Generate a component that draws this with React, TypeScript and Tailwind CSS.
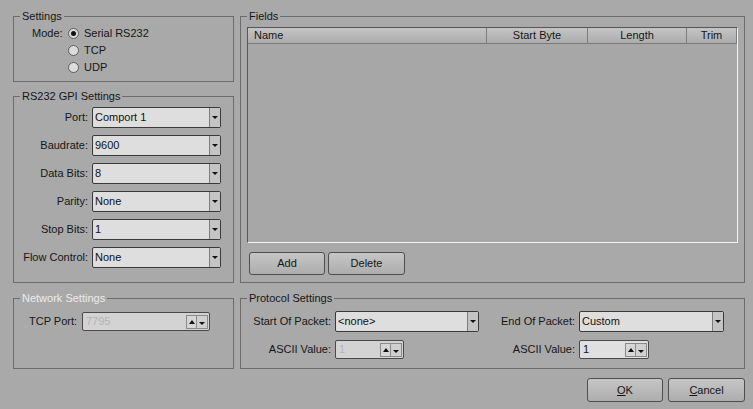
import React from "react";

const font = { fontFamily: '"Liberation Sans", Arial, sans-serif' };

function Group({
  title,
  disabled,
  className,
  children,
}: {
  title: string;
  disabled?: boolean;
  className?: string;
  children?: React.ReactNode;
}) {
  return (
    <fieldset className={`border border-[#6c6c6c] p-0 m-0 min-w-0 ${className ?? ""}`}>
      <legend
        className={`ml-[6px] px-[2px] h-[14px] leading-[14px] ${
          disabled ? "text-[#ececec]" : "text-[#161616]"
        }`}
      >
        {title}
      </legend>
      {children}
    </fieldset>
  );
}

function Radio({ label, checked }: { label: string; checked?: boolean }) {
  return (
    <div className="flex h-[17px] items-center gap-[5px]">
      <span className="flex h-[11px] w-[11px] items-center justify-center rounded-full border border-[#5c5c5c] bg-[#dcdcdc]">
        {checked && <span className="h-[5px] w-[5px] rounded-full bg-[#111]" />}
      </span>
      <span>{label}</span>
    </div>
  );
}

function Combo({ value, className }: { value: string; className?: string }) {
  return (
    <div
      className={`flex h-[21px] rounded-[2px] border border-[#3a3a3a] bg-[#dedede] ${className ?? ""}`}
    >
      <div className="flex-1 pl-[2px] leading-[19px] text-[#111]">{value}</div>
      <div className="flex w-[11px] items-center justify-center border-l border-[#7c7c7c] bg-[#c4c4c4]">
        <span className="h-0 w-0 border-x-[3px] border-t-[3px] border-x-transparent border-t-[#111]" />
      </div>
    </div>
  );
}

function Spin({
  value,
  disabled,
  className,
}: {
  value: string;
  disabled?: boolean;
  className?: string;
}) {
  return (
    <div
      className={`flex h-[19px] items-center rounded-[2px] border border-[#4a4a4a] ${
        disabled ? "bg-[#d3d3d3]" : "bg-[#e0e0e0]"
      } ${className ?? ""}`}
    >
      <div
        className={`flex-1 pl-[3px] leading-[17px] ${
          disabled ? "text-[#b4b4b4]" : "text-[#111]"
        }`}
      >
        {value}
      </div>
      <div className="mr-[1px] flex h-[14px]">
        <div className="flex w-[11px] items-center justify-center border border-[#8a8a8a] bg-[#d6d6d6]">
          <span className="h-0 w-0 border-x-[3px] border-b-[4px] border-x-transparent border-b-[#111]" />
        </div>
        <div className="flex w-[11px] items-end justify-center pb-[3px] border-y border-r border-[#8a8a8a] bg-[#d0d0d0]">
          <span className="h-0 w-0 border-x-[3px] border-t-[3px] border-x-transparent border-t-[#111]" />
        </div>
      </div>
    </div>
  );
}

function Button({ children, className }: { children: React.ReactNode; className?: string }) {
  return (
    <div
      className={`flex h-[23px] items-center justify-center rounded-[3px] border border-[#4e4e4e] bg-gradient-to-b from-[#c6c6c6] to-[#adadad] text-[#161616] ${
        className ?? ""
      }`}
    >
      {children}
    </div>
  );
}

const rs232 = [
  ["Port:", "Comport 1"],
  ["Baudrate:", "9600"],
  ["Data Bits:", "8"],
  ["Parity:", "None"],
  ["Stop Bits:", "1"],
  ["Flow Control:", "None"],
];

const columns = [
  { name: "Name", w: "w-[239px]", left: true },
  { name: "Start Byte", w: "w-[101px]" },
  { name: "Length", w: "w-[99px]" },
  { name: "Trim", w: "flex-1" },
];

export default function App() {
  return (
    <div
      style={font}
      className="flex h-[409px] w-[753px] flex-col bg-[#a9a9a9] pl-[13px] pr-[8px] pt-[9px] text-[11px] text-[#161616]"
    >
      {/* top row */}
      <div className="flex gap-[6px]">
        <div className="flex w-[221px] flex-col gap-[7px]">
          <Group title="Settings" className="h-[73px]">
            <div className="mt-[2px] flex pl-[18px]">
              <div className="h-[17px] w-[36px] leading-[17px]">Mode:</div>
              <div className="flex flex-col">
                <Radio label="Serial RS232" checked />
                <Radio label="TCP" />
                <Radio label="UDP" />
              </div>
            </div>
          </Group>

          <Group title="RS232 GPI Settings" className="h-[194px]">
            <div className="mt-[4px] flex flex-col gap-[7px]">
              {rs232.map(([label, value]) => (
                <div key={label} className="flex h-[21px] items-center">
                  <div className="w-[74px] text-right">{label}</div>
                  <Combo value={value} className="ml-[4px] w-[129px]" />
                </div>
              ))}
            </div>
          </Group>
        </div>

        <Group title="Fields" className="h-[274px] w-[505px]">
          <div className="mt-[4px] px-[6px]">
            <div className="flex h-[216px] flex-col border-l border-t border-[#565656] border-r-[#f4f4f4] border-b-[#f4f4f4] border-r border-b">
              <div className="flex h-[16px] border-b border-[#7a7a7a] bg-gradient-to-b from-[#c4c4c4] to-[#adadad]">
                {columns.map((c) => (
                  <div
                    key={c.name}
                    className={`${c.w} border-r border-[#7d7d7d] leading-[15px] ${
                      c.left ? "pl-[6px]" : "text-center"
                    }`}
                  >
                    {c.name}
                  </div>
                ))}
              </div>
              <div className="flex-1 bg-[#a7a7a7]" />
            </div>
          </div>
          <div className="mt-[9px] flex gap-[3px] pl-[8px]">
            <Button className="w-[76px]">Add</Button>
            <Button className="w-[77px]">Delete</Button>
          </div>
        </Group>
      </div>

      {/* bottom row */}
      <div className="mt-[8px] flex gap-[6px]">
        <Group title="Network Settings" disabled className="h-[78px] w-[221px]">
          <div className="mt-[7px] flex items-center pl-[15px]">
            <div className="w-[53px]">TCP Port:</div>
            <Spin value="7795" disabled className="w-[128px]" />
          </div>
        </Group>

        <Group title="Protocol Settings" className="h-[78px] w-[505px]">
          <div className="mt-[6px] grid grid-cols-[82px_144px_92px_145px] items-center gap-x-[4px] gap-y-[8px] pl-[8px]">
            <div className="text-right">Start Of Packet:</div>
            <Combo value="<none>" className="h-[20px]" />
            <div className="text-right">End Of Packet:</div>
            <Combo value="Custom" className="h-[20px]" />
            <div className="text-right">ASCII Value:</div>
            <Spin value="1" disabled className="w-[69px]" />
            <div className="text-right">ASCII Value:</div>
            <Spin value="1" className="w-[70px]" />
          </div>
        </Group>
      </div>

      {/* dialog buttons */}
      <div className="mt-[9px] flex justify-end gap-[5px]">
        <Button className="h-[24px] w-[76px]">
          <span className="underline">O</span>K
        </Button>
        <Button className="h-[24px] w-[77px]">
          <span className="underline">C</span>ancel
        </Button>
      </div>
    </div>
  );
}
